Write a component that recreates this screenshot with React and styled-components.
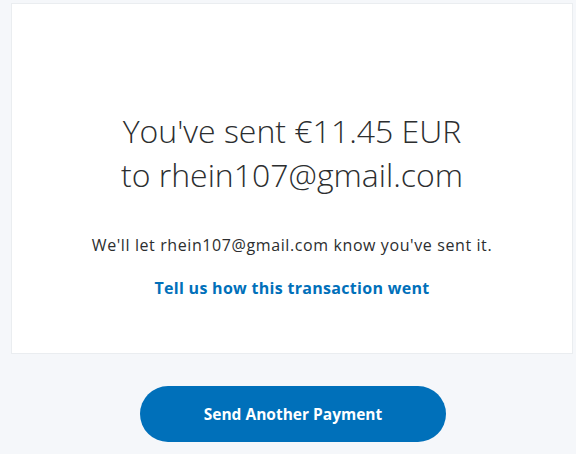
import React from "react";
import styled, { createGlobalStyle } from "styled-components";

const Global = createGlobalStyle`
  html, body { margin: 0; padding: 0; background: #f5f7fa; }
  body { font-family: "Open Sans", "Noto Sans", sans-serif; }
`;

const Page = styled.div`
  display: flex;
  flex-direction: column;
  align-items: center;
  padding: 3px 3px 0 11px;
`;

const Card = styled.section`
  box-sizing: border-box;
  width: 100%;
  height: 351px;
  background: #ffffff;
  border: 1px solid #eaedf0;
  display: flex;
  flex-direction: column;
  align-items: center;
  padding-top: 105px;
`;

const Heading = styled.h1`
  margin: 0;
  font-family: "Open Sans", sans-serif;
  font-weight: 300;
  font-size: 32px;
  line-height: 44px;
  color: #2c2e2f;
  text-align: center;
`;

const Body = styled.p`
  margin: 37px 0 0;
  font-size: 16px;
  letter-spacing: 0.6px;
  line-height: 22px;
  color: #2c2e2f;
  text-align: center;
`;

const Link = styled.a`
  margin-top: 21px;
  font-size: 16px;
  letter-spacing: 0.3px;
  line-height: 22px;
  font-weight: 700;
  color: #0070ba;
  text-decoration: none;
`;

const Button = styled.button`
  margin-top: 32px;
  margin-left: 2px;
  width: 306px;
  height: 56px;
  border: none;
  border-radius: 28px;
  background: #0070ba;
  color: #ffffff;
  font-family: "Open Sans", sans-serif;
  font-size: 15.5px;
  font-weight: 700;
  cursor: pointer;
`;

export default function App() {
  return (
    <>
      <Global />
      <Page>
        <Card>
          <Heading>
            You've sent €11.45 EUR
            <br />
            to rhein107@gmail.com
          </Heading>
          <Body>We'll let rhein107@gmail.com know you've sent it.</Body>
          <Link href="#">Tell us how this transaction went</Link>
        </Card>
        <Button>Send Another Payment</Button>
      </Page>
    </>
  );
}
